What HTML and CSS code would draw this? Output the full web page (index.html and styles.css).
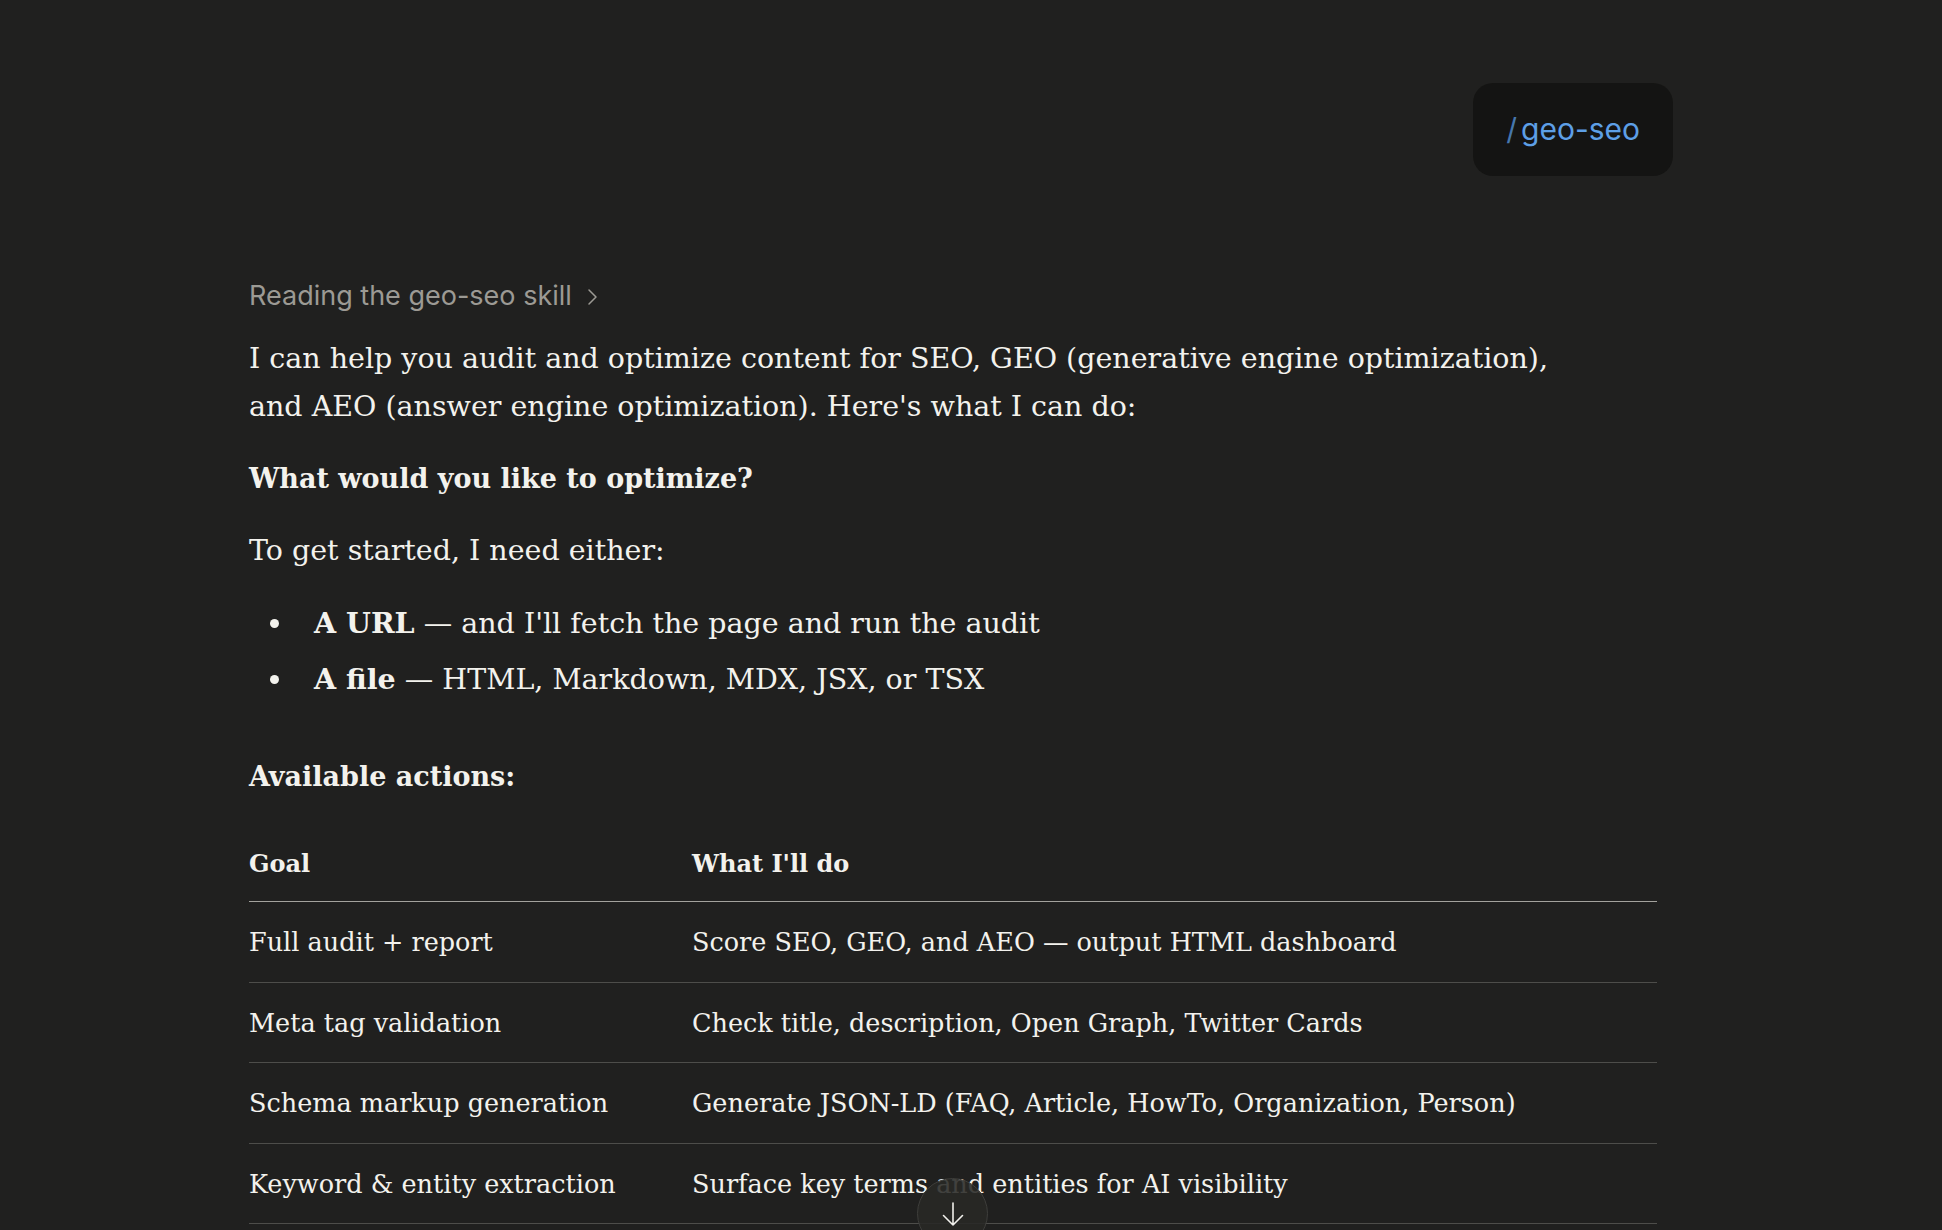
FILE: index.html
```html
<!DOCTYPE html>
<html>
<head>
    <meta charset="utf-8">
    <meta name="viewport" content="width=device-width">
    <title>geo-seo</title>
    <link rel="stylesheet" href="styles.css">
</head>
<body>
    <main class="page">
        <div class="thread">
            <div class="user-row">
                <div class="user-bubble"><span class="slash">/</span>geo-seo</div>
            </div>

            <div class="reply">
                <div class="tool-step">Reading the geo-seo skill
                    <svg class="chevron" width="16" height="18" viewBox="0 0 16 18" fill="none">
                        <path d="M5 2 L12 9 L5 16" stroke="currentColor" stroke-width="1.5" stroke-linecap="round" stroke-linejoin="round"/>
                    </svg>
                </div>

                <p>I can help you audit and optimize content for SEO, GEO (generative engine optimization),<br>
                and AEO (answer engine optimization). Here's what I can do:</p>

                <p class="strong">What would you like to optimize?</p>

                <p>To get started, I need either:</p>

                <ul class="bullets">
                    <li><span><b>A URL</b> — and I'll fetch the page and run the audit</span></li>
                    <li><span><b>A file</b> — HTML, Markdown, MDX, JSX, or TSX</span></li>
                </ul>

                <h3>Available actions:</h3>

                <table class="actions">
                    <thead>
                        <tr><th class="goal">Goal</th><th>What I'll do</th></tr>
                    </thead>
                    <tbody>
                        <tr><td>Full audit + report</td><td>Score SEO, GEO, and AEO — output HTML dashboard</td></tr>
                        <tr><td>Meta tag validation</td><td>Check title, description, Open Graph, Twitter Cards</td></tr>
                        <tr><td>Schema markup generation</td><td>Generate JSON-LD (FAQ, Article, HowTo, Organization, Person)</td></tr>
                        <tr><td>Keyword &amp; entity extraction</td><td>Surface key terms and entities for AI visibility</td></tr>
                    </tbody>
                </table>
            </div>
        </div>
    </main>

    <button class="scroll-down" type="button" aria-label="Scroll to bottom">
        <svg width="26" height="26" viewBox="0 0 26 26" fill="none">
            <path d="M13 2 V24 M3.5 14.5 L13 24 L22.5 14.5" stroke="#f2f1ec" stroke-width="1.6" stroke-linecap="round" stroke-linejoin="round"/>
        </svg>
    </button>
</body>
</html>
```

FILE: styles.css
```css
body {
    margin: 0;
    background-color: #20201f;
    color: #f3f2ed;
    font-family: "DejaVu Serif", serif;
}

.page {
    padding-right: 20px;
}

.thread {
    max-width: 1424px;
    margin: 0 auto;
}

.user-row {
    display: flex;
    justify-content: flex-end;
    padding-top: 83px;
}

.user-bubble {
    background-color: #141413;
    border-radius: 20px;
    padding: 26px 33px;
    line-height: 41px;
    font-family: Inter, sans-serif;
    font-size: 30px;
    color: #5d9fe6;
}

.slash {
    color: #4677ad;
    margin-right: 4px;
}

.reply {
    padding-top: 102px;
}

.tool-step {
    display: flex;
    align-items: center;
    gap: 12px;
    font-family: Inter, sans-serif;
    font-size: 27px;
    line-height: 36px;
    color: #9c9a94;
}

.chevron {
    margin-top: 1px;
}

p, h3 {
    margin: 24px 0 0;
    font-size: 28.5px;
    line-height: 48px;
    font-weight: 400;
}

.reply > p:first-of-type {
    margin-top: 21px;
}

.strong, h3 {
    font-size: 27px;
    font-weight: 700;
}

h3 {
    margin-top: 49px;
}

.bullets {
    list-style: none;
    margin: 24px 0 0;
    padding: 0 0 0 21px;
    font-size: 28.5px;
    line-height: 48px;
}

.bullets li {
    display: flex;
    align-items: center;
    gap: 35px;
}

.bullets li + li {
    margin-top: 7px;
}

.bullets li::before {
    content: "";
    width: 9px;
    height: 9px;
    border-radius: 50%;
    background-color: #f3f2ed;
    flex-shrink: 0;
}

.actions {
    width: 1408px;
    margin-top: 24px;
    border-collapse: collapse;
    font-size: 25.5px;
    line-height: 48px;
}

.actions th, .actions td {
    text-align: left;
    vertical-align: middle;
}

.actions th {
    padding: 15px 0 13px;
    font-size: 24px;
    font-weight: 700;
    border-bottom: 1px solid #a3a29d;
}

.actions td {
    padding: 16px 0 15.5px;
    border-bottom: 1px solid #4d4d4a;
}

.actions .goal {
    width: 443px;
}

.scroll-down {
    position: fixed;
    left: 917px;
    top: 1178px;
    width: 71px;
    height: 71px;
    border-radius: 50%;
    border: 1px solid #3e3e3b;
    background-color: rgba(40, 40, 38, 0.88);
    display: flex;
    align-items: center;
    justify-content: center;
    padding: 0;
    cursor: pointer;
}
```
